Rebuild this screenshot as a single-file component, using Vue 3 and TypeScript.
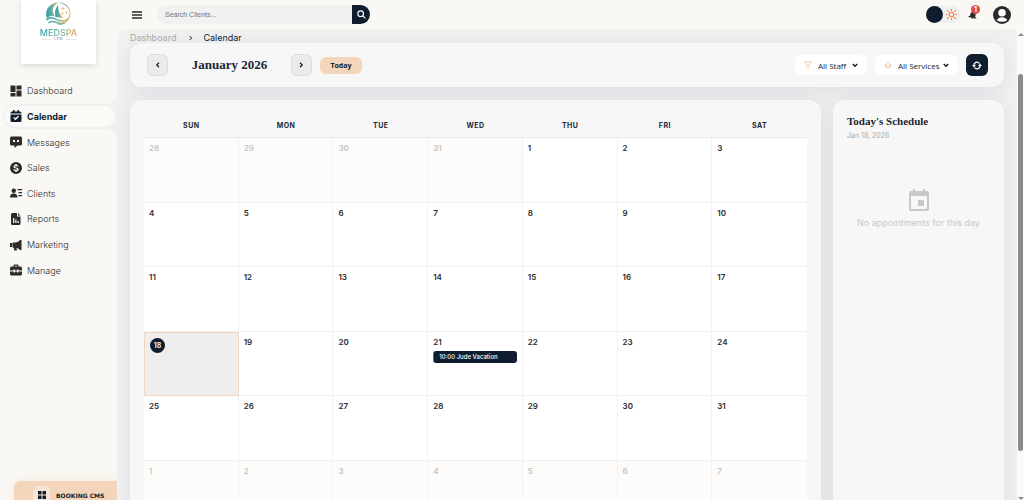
<script setup lang="ts">
import { ref } from 'vue'

interface NavItem { label: string; icon: string }
interface Day { n: number; muted?: boolean; today?: boolean; event?: string }

const nav: NavItem[] = [
  { label: 'Dashboard', icon: 'M1 1h10v13H1zM13 1h10v8H13zM1 16h10v7H1zM13 11h10v12H13z' },
  { label: 'Calendar', icon: 'M6 0h3v3h6V0h3v3h2q3 0 3 3v1H1V6q0-3 3-3h2zM1 9h22v12q0 3-3 3H4q-3 0-3-3zM16 11.500l-5 5-2.500-2.500-2 2 4.500 4.500 7-7z' },
  { label: 'Messages', icon: 'M3 1h18q3 0 3 3v12q0 3-3 3h-6l-6 5v-5H3q-3 0-3-3V4q0-3 3-3zM6 8v4h4V8zM14 8v4h4V8z' },
  { label: 'Sales', icon: 'M12 0a12 12 0 1 0 0 24 12 12 0 0 0 0-24zM10.500 4h3v2q3 .3 3.500 3h-3q-.4-1-2-1-2 0-2 1.300 0 1 2.500 1.500 5 1 5 4 0 3-4 3.700V20h-3v-2Q7 17.500 6.500 14.500h3q.5 1.500 2.500 1.500t2-1.300q0-1-2.500-1.500-5-1-4.700-4Q7 6.500 10.500 6z' },
  { label: 'Clients', icon: 'M7.500 3a4.500 4.500 0 1 1 0 9 4.500 4.500 0 0 1 0-9zM0 21q0-8 7.500-8T15 21zM15 4h9v2.500h-9zM17 10h7v2.500h-7zM17 16h7v2.500h-7z' },
  { label: 'Reports', icon: 'M5 0h9v7h7v14q0 3-3 3H5q-3 0-3-3V3q0-3 3-3zM16 0l5 5h-5zM6 10v10h2.500V10zM10.500 13v7H13v-7zM15 16v4h2.500v-4z' },
  { label: 'Marketing', icon: 'M0 8h4v8H0zM5 7h6q6-1 9-5h3v20h-3q-2-3-7-4l1 5H9l-2-6H5z' },
  { label: 'Manage', icon: 'M7 5V3q0-2 2-2h6q2 0 2 2v2h4q3 0 3 3v5h-7v-2h-3v2h-4v-2H7v2H0V8q0-3 3-3zM9.500 5h5V3.500h-5zM0 15h7v2h3v-2h4v2h3v-2h7v5q0 3-3 3H3q-3 0-3-3z' },
]
const active = ref('Calendar')
const weekdays = ['SUN', 'MON', 'TUE', 'WED', 'THU', 'FRI', 'SAT']

const days: Day[] = [
  ...[28, 29, 30, 31].map((n) => ({ n, muted: true })),
  ...Array.from({ length: 31 }, (_, i): Day => ({
    n: i + 1,
    today: i + 1 === 18,
    event: i + 1 === 21 ? '10:00 Jude Vacation' : undefined,
  })),
  ...[1, 2, 3, 4, 5, 6, 7].map((n) => ({ n, muted: true })),
]
const weeks = Array.from({ length: 6 }, (_, w) => days.slice(w * 7, w * 7 + 7))
const query = ref('')
const staff = ref('All Staff')
const service = ref('All Services')
</script>

<template>
  <div class="app">
    <aside class="sidebar">
      <div class="brand">
        <svg class="logo" viewBox="0 0 54 50" aria-hidden="true">
          <defs>
            <linearGradient id="tone" x1="0" x2="1">
              <stop offset="0" stop-color="#2a9aa6" />
              <stop offset=".5" stop-color="#6db3a0" />
              <stop offset="1" stop-color="#e3a549" />
            </linearGradient>
          </defs>
          <path fill="url(#tone)" d="M26 1C8 2-2 18 4 33c4-5 9-6 14-4l1-3C12 18 16 7 26 1z" />
          <path fill="url(#tone)" d="M26 1c22-2 32 22 19 37-5 5-13 9-22 8 15-2 27-11 26-25C48 10 38 3 26 1z" />
          <path fill="url(#tone)" d="M26 6c-6 8-7 15-5 24l15 2C29 25 26 16 26 6z" />
          <path fill="none" stroke="url(#tone)" stroke-width="3" d="M3 36c8-8 15-3 22 0s14 3 21-2M7 42c7-6 13-2 19 0s10 1 14-1" />
          <path fill="#e8b45e" d="M36 9l1 3 3 1-3 1-1 3-1-3-3-1 3-1zM43 18l1 2 2 1-2 1-1 2-1-2-2-1 2-1zM35 20l1 2 2 1-2 1-1 2-1-2-2-1 2-1z" />
        </svg>
        <span class="brand-name">MEDSPA</span>
        <span class="brand-sub">CRM</span>
      </div>
      <nav class="nav">
        <a v-for="item in nav" :key="item.label" href="#" class="nav-item" :class="{ active: item.label === active }" @click.prevent="active = item.label">
          <span class="nav-pill">
            <svg viewBox="0 0 24 24" aria-hidden="true"><path fill-rule="evenodd" :d="item.icon" /></svg>
            {{ item.label }}
          </span>
        </a>
      </nav>
      <button class="booking" type="button">
        <span class="booking-icon">
          <svg viewBox="0 0 16 16" aria-hidden="true"><path d="M0 0h7v7H0zM9 0h7v7H9zM0 9h7v7H0zM9 9h7v7H9z" /></svg>
        </span>
        BOOKING CMS
      </button>
    </aside>

    <div class="content">
      <header class="topbar">
        <button class="plain" type="button" aria-label="Toggle menu">
          <svg class="menu" viewBox="0 0 10 8"><path d="M0 1h10M0 4h10M0 7h10" /></svg>
        </button>
        <form class="search" @submit.prevent>
          <input v-model="query" type="text" placeholder="Search Clients..." aria-label="Search clients" />
          <button type="submit" aria-label="Search">
            <svg viewBox="0 0 16 16"><circle cx="6.500" cy="6.500" r="5" /><path d="M10 10l5 5" /></svg>
          </button>
        </form>
        <button class="theme" type="button" aria-label="Toggle theme">
          <span class="knob"></span>
          <svg viewBox="0 0 24 24"><circle cx="12" cy="12" r="5" /><path d="M12 0v3M12 21v3M0 12h3M21 12h3M3.500 3.500l2 2M18.500 18.500l2 2M20.500 3.500l-2 2M5.500 18.500l-2 2" /></svg>
        </button>
        <button class="plain bell" type="button" aria-label="Notifications">
          <svg viewBox="0 0 24 24"><path d="M10 2h4v3q5 1 5 7v5l4 3v1H1v-1l4-3v-5q0-6 5-7zM9 22h6q-1 2-3 2t-3-2z" /></svg>
          <span class="badge">1</span>
        </button>
        <button class="plain" type="button" aria-label="Account">
          <svg class="avatar" viewBox="0 0 24 24"><circle cx="12" cy="12" r="12" /><path class="light" fill-rule="evenodd" d="M12 4a5 5 0 1 1 0 10 5 5 0 0 1 0-10zM5 19q2-4 7-4t7 4q-3 2-7 2t-7-2z" /></svg>
        </button>
      </header>

      <div class="stage">
        <main class="main">
          <nav class="crumbs" aria-label="Breadcrumb">
            <a href="#">Dashboard</a>
            <svg viewBox="0 0 6 8" aria-hidden="true"><path d="M1 1l3 3-3 3" /></svg>
            <span>Calendar</span>
          </nav>

          <section class="card toolbar">
            <button class="step" type="button" aria-label="Previous month"><svg viewBox="0 0 6 8"><path d="M5 1L2 4l3 3" /></svg></button>
            <h1>January 2026</h1>
            <button class="step" type="button" aria-label="Next month"><svg viewBox="0 0 6 8"><path d="M1 1l3 3-3 3" /></svg></button>
            <button class="today-btn" type="button">Today</button>
            <label class="filter staff">
              <svg class="tint" viewBox="0 0 16 16"><path d="M1 2h14l-5 6v6l-4-2V8z" /></svg>
              <select v-model="staff" aria-label="Staff"><option>All Staff</option></select>
              <svg class="chevron" viewBox="0 0 8 6"><path d="M1 1l3 3 3-3" /></svg>
            </label>
            <label class="filter services">
              <svg class="tint" viewBox="0 0 16 16"><path d="M8 14Q2 14 1 7q3 0 4 2-1-4 3-8 4 4 3 8 1-2 4-2-1 7-7 7zM8 14q-3-2-3-5M8 14q3-2 3-5" /></svg>
              <select v-model="service" aria-label="Services"><option>All Services</option></select>
              <svg class="chevron" viewBox="0 0 8 6"><path d="M1 1l3 3 3-3" /></svg>
            </label>
            <button class="refresh" type="button" aria-label="Refresh">
              <svg viewBox="0 0 20 18"><path d="M4 9a6 6 0 0 1 11-4M16 9a6 6 0 0 1-11 4" /><path class="solid" d="M0 8h8l-4 5zM12 10h8l-4-5z" /></svg>
            </button>
          </section>

          <div class="columns">
            <section class="card calendar">
              <table>
                <thead>
                  <tr><th v-for="d in weekdays" :key="d" scope="col">{{ d }}</th></tr>
                </thead>
                <tbody>
                  <tr v-for="(week, w) in weeks" :key="w">
                    <td v-for="(day, i) in week" :key="i" :class="{ muted: day.muted, today: day.today }">
                      <span class="num">{{ day.n }}</span>
                      <button v-if="day.event" class="event" type="button">{{ day.event }}</button>
                    </td>
                  </tr>
                </tbody>
              </table>
            </section>
            <aside class="card schedule">
              <h2>Today's Schedule</h2>
              <p class="date">Jan 18, 2026</p>
              <div class="empty">
                <svg viewBox="0 0 20 22" aria-hidden="true"><path fill-rule="evenodd" d="M4 0h2v2h8V0h2v2h2q2 0 2 2v16q0 2-2 2H2q-2 0-2-2V4q0-2 2-2h2zM2 7v13h16V7zM9 11h6v6H9z" /></svg>
                <p>No appointments for this day</p>
              </div>
            </aside>
          </div>
        </main>
        <div class="scrollbar" aria-hidden="true">
          <span class="arrow up"></span>
          <span class="thumb"></span>
          <span class="arrow down"></span>
        </div>
      </div>
    </div>
  </div>
</template>

<style>
body { margin: 0; overflow: hidden; }
</style>

<style scoped>
* { box-sizing: border-box; }
button { border: 0; padding: 0; margin: 0; background: none; font: inherit; color: inherit; cursor: pointer; }
h1, h2, p { margin: 0; }
a { color: inherit; text-decoration: none; }
svg { display: block; flex: none; }

.app {
  display: flex;
  height: 100vh;
  overflow: hidden;
  background: #faf8f4;
  color: #2b2b2b;
  font-family: Inter, "Open Sans", sans-serif;
  font-size: 9px;
}

.sidebar { display: flex; flex-direction: column; width: 117px; flex: none; }
.brand {
  display: flex;
  flex-direction: column;
  align-items: center;
  width: 75px;
  height: 64px;
  margin-left: 21px;
  padding-top: 2px;
  background: #fff;
  box-shadow: 0 2px 6px rgba(0, 0, 0, 0.12);
}
.logo { width: 27px; height: 25px; }
.brand-name {
  line-height: 11px;
  font-size: 9px;
  font-weight: 500;
  background: linear-gradient(90deg, #2a9fae, #6fb5a0 55%, #e0a045);
  background-clip: text;
  color: transparent;
}
.brand-sub { display: flex; align-items: center; gap: 3px; font-size: 3px; line-height: 3px; color: #777; letter-spacing: 1px; }
.brand-sub::before, .brand-sub::after { content: ""; width: 10px; height: 1px; background: #e6e6e6; }

.nav { display: grid; grid-auto-rows: 1fr; height: 205px; margin-top: 14px; font-weight: 300; }
.nav-item { position: relative; display: flex; padding: 2px 2px 2px 5px; color: #2b2b2b; }
.nav-pill { display: flex; flex: 1; align-items: center; gap: 5px; padding-left: 5px; border-radius: 12px; }
.nav-pill svg { width: 12px; height: 12px; fill: #2b2b2b; }
.nav-item.active { background: #f2f1f1; border-radius: 13px 0 0 13px; margin-left: 3px; padding-left: 2px; color: #0f1e2e; font-weight: 700; }
.nav-item.active .nav-pill { background: #fbfaf7; }
.nav-item.active svg { fill: #0f1e2e; }
.nav-item.active::before, .nav-item.active::after { content: ""; position: absolute; right: 0; width: 10px; height: 10px; }
.nav-item.active::before { bottom: 100%; background: radial-gradient(circle at 0 0, transparent 9px, #f2f1f1 10px); }
.nav-item.active::after { top: 100%; background: radial-gradient(circle at 0 100%, transparent 9px, #f2f1f1 10px); }

.booking {
  display: flex;
  align-items: center;
  gap: 6px;
  height: 28px;
  margin: auto 0 -9px 14px;
  padding-left: 19px;
  border-radius: 7px 0 0 7px;
  background: #f3d5bb;
  box-shadow: 0 0 8px rgba(243, 213, 187, 0.5);
  color: #0f1e2e;
  font: 700 6px "DejaVu Sans", sans-serif;
  white-space: nowrap;
}
.booking-icon { display: grid; place-items: center; width: 17px; height: 18px; border-radius: 5px; background: #f8e5d6; }
.booking-icon svg { width: 8px; height: 8px; fill: #0f1e2e; }

.content { display: flex; flex: 1; flex-direction: column; min-width: 0; }
.topbar { display: flex; align-items: center; flex: none; height: 29px; padding: 0 13px 0 15px; }
.plain { position: relative; }
.menu { width: 10px; height: 8px; stroke: #2b2b2b; stroke-width: 1.5; }
.search { display: flex; width: 213px; height: 19px; margin-left: 15px; margin-right: auto; border-radius: 10px; overflow: hidden; background: #f1f1f1; }
.search input { flex: 1; min-width: 0; border: 0; outline: 0; padding: 0 8px; background: none; font: 7px "Liberation Sans", Arial, sans-serif; color: #444; }
.search input::placeholder { color: #757575; opacity: 1; }
.search button { display: grid; place-items: center; width: 18px; background: #0f1e2e; }
.search svg { width: 9px; height: 9px; fill: none; stroke: #fff; stroke-width: 2; }
.theme { display: flex; align-items: center; gap: 3px; width: 35px; height: 17px; border-radius: 9px; background: #f1f0ef; }
.knob { width: 17px; height: 17px; border-radius: 50%; background: #0f1e2e; }
.theme svg { width: 11px; height: 11px; fill: none; stroke: #f47b45; stroke-width: 2.4; stroke-linecap: round; }
.bell { margin: 0 15px 0 7px; }
.bell svg { width: 10px; height: 9px; fill: #2b2b2b; transform: rotate(12deg); }
.badge { position: absolute; right: -2px; top: -5px; width: 9px; height: 9px; border-radius: 50%; background: #e04b4b; color: #fff; font-size: 7px; font-weight: 700; line-height: 9px; }
.avatar { width: 18px; height: 18px; fill: #2b2b2b; }
.light { fill: #fff; }

.stage { display: flex; flex: 1; min-height: 0; border-top-left-radius: 10px; background: #f1f1f1; overflow: hidden; }
.main { flex: 1; min-width: 0; padding: 0 13px; }
.crumbs { display: flex; align-items: center; height: 14px; padding-top: 4px; line-height: 10px; color: #0f1e2e; }
.crumbs a { color: #a9a9a9; }
.crumbs svg { width: 4px; height: 6px; margin: 0 10px 0 13px; fill: none; stroke: #2b2b2b; stroke-width: 1.5; }
.card { border-radius: 12px; background: #f7f7f7; box-shadow: 0 3px 20px rgba(60, 60, 120, 0.1); }

.toolbar { display: flex; align-items: center; height: 44px; padding: 0 16px 0 17px; }
.step { display: grid; place-items: center; width: 21px; height: 22px; border: 1px solid #dcdcdc; border-radius: 6px; background: #ebebeb; }
.step svg { width: 5px; height: 6px; fill: none; stroke: #0f1e2e; stroke-width: 1.6; }
h1, h2 { color: #1a2836; font-family: "Liberation Serif", "Times New Roman", serif; font-weight: 700; }
h1 { width: 123px; text-align: center; font-size: 13px; line-height: 18px; }
.today-btn { width: 42px; height: 17px; margin: 0 auto 0 8px; border-radius: 6px; background: #f3d5bb; color: #0f1e2e; font: 700 7px "Open Sans", sans-serif; }
.filter { display: flex; align-items: center; height: 20px; margin-right: 8px; padding: 0 9px; border-radius: 7px; background: #fff; }
.staff { width: 72px; }
.services { width: 83px; }
.tint { width: 8px; height: 8px; margin-right: 6px; fill: none; stroke: #f3d0b2; stroke-width: 2; }
.filter select { flex: 1; min-width: 0; appearance: none; border: 0; outline: 0; padding: 0; background: none; color: #0f1e2e; font: 500 8px "Open Sans", sans-serif; }
.chevron { width: 6px; height: 5px; fill: none; stroke: #0f1e2e; stroke-width: 1.8; }
.refresh { display: grid; place-items: center; width: 22px; height: 22px; border-radius: 6px; background: #0f1e2e; }
.refresh svg { width: 10px; height: 9px; fill: none; stroke: #fff; stroke-width: 2.6; }
.refresh .solid { fill: #fff; stroke: none; }

.columns { display: flex; gap: 12px; margin-top: 13px; }
.calendar { flex: 1; min-width: 0; padding: 14px; }
table, thead, tbody { display: block; }
tr { display: grid; grid-template-columns: repeat(7, minmax(0, 1fr)); min-height: 0; }
th { height: 23px; padding: 0; line-height: 23px; color: #1a2836; font-size: 7px; font-weight: 700; letter-spacing: 0.5px; }
tbody { display: grid; grid-auto-rows: minmax(0, 1fr); height: 388px; border-top: 1px solid #e8e8e8; }
td { display: flex; flex-direction: column; align-items: flex-start; gap: 4px; min-width: 0; padding: 5px; border-right: 1px solid #f2f2f2; border-bottom: 1px solid #f2f2f2; background: #fff; font-size: 8px; font-weight: 600; line-height: 10px; }
td:last-child { border-right: 0; }
td.muted { background: #fdfcfa; color: #c4c4c4; }
td.today { border: 1px solid #f3d5bb; background: #efeeed; }
.today .num { width: 15px; height: 15px; border-radius: 50%; background: #0f1e2e; color: #fff; font-size: 7px; line-height: 15px; text-align: center; }
.event { width: 84px; max-width: 100%; height: 12px; padding-left: 5px; border-left: 1px solid #52707a; border-radius: 3px; background: #0f1e2e; color: #fff; font-size: 6px; line-height: 12px; font-weight: 500; text-align: left; white-space: nowrap; overflow: hidden; }

.schedule { width: 171px; flex: none; padding: 14px; }
h2 { font-size: 11px; line-height: 14px; }
.date { margin-top: 3px; color: #a9a9a9; font-size: 7px; line-height: 9px; }
.empty { display: flex; flex-direction: column; align-items: center; gap: 6px; margin: 49px -10px 0; color: #c8c8c8; line-height: 12px; white-space: nowrap; }
.empty svg { width: 20px; height: 22px; fill: #c8c8c8; }

.scrollbar { display: flex; flex-direction: column; align-items: center; width: 7px; flex: none; background: #fbfbfb; }
.arrow { width: 0; height: 0; flex: none; border: 3px solid transparent; }
.up { border-bottom-color: #8b8b8b; margin-top: 1px; }
.down { border-top-color: #8b8b8b; margin: auto 0 -3px; }
.thumb { width: 5px; height: 80%; margin-top: 38px; border-radius: 3px; background: #8b8b8b; }
</style>
